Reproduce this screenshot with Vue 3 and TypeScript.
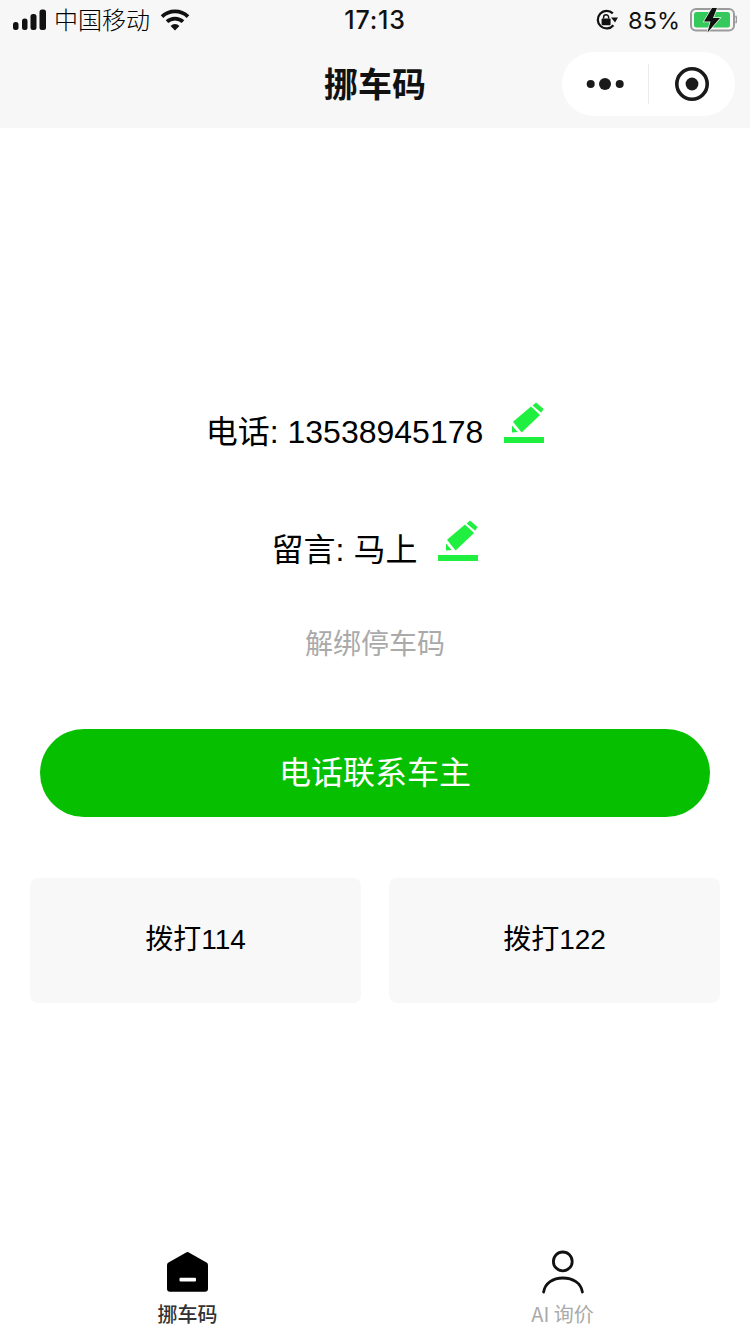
<script setup lang="ts">
const cards: string[] = ['拨打114', '拨打122']
</script>

<template>
  <div class="page">
    <header class="header">
      <div class="status">
        <div class="status-left">
          <svg class="signal" width="34" height="22" viewBox="0 0 34 22">
            <rect x="0" y="13" width="5.5" height="8" rx="2.5" />
            <rect x="9" y="9.5" width="5.5" height="11.5" rx="2.5" />
            <rect x="17.5" y="5" width="6" height="16" rx="2.5" />
            <rect x="26.5" y="0.5" width="6.5" height="20.5" rx="2.5" />
          </svg>
          <span class="carrier">中国移动</span>
          <svg class="wifi" width="30" height="24" viewBox="0 0 30 24">
            <path d="M2 8.6 A19 19 0 0 1 28 8.6" fill="none" stroke="#111" stroke-width="3.8" />
            <path d="M7 13.6 A12 12 0 0 1 23 13.6" fill="none" stroke="#111" stroke-width="3.8" />
            <path d="M10.6 18 A6 6 0 0 1 19.4 18 L15 22.6 Z" fill="#111" />
          </svg>
        </div>
        <div class="time">17:13</div>
        <div class="status-right">
          <svg width="22" height="22" viewBox="0 0 22 22">
            <path d="M17.4 16.2 A8.8 8.8 0 1 1 16.8 4.4" fill="none" stroke="#111" stroke-width="2.2" />
            <path d="M15 8.4 L22 8.4 L19 13.4 Z" fill="#111" />
            <rect x="5.6" y="9.6" width="9" height="6.6" rx="1" fill="#111" />
            <path d="M7.6 9.6 V8.2 A2.5 2.5 0 0 1 12.6 8.2 V9.6" fill="none" stroke="#111" stroke-width="1.5" />
          </svg>
          <span class="percent">85%</span>
          <svg class="battery" width="47" height="26" viewBox="0 0 47 26">
            <rect x="1" y="2" width="43" height="21.5" rx="5" fill="none" stroke="#9b9b9b" stroke-width="2" />
            <rect x="4" y="5" width="36" height="15.5" rx="2.5" fill="#35c95c" />
            <path d="M45.5 9 C47 10 47 15 45.5 16" fill="none" stroke="#9b9b9b" stroke-width="1.6" />
            <path class="bolt" d="M22 1 L14 14.5 L20.5 14.5 L17.5 25.5 L30 11 L23 11 L27 1 Z" />
          </svg>
        </div>
      </div>
      <div class="nav">
        <span></span>
        <h1 class="title">挪车码</h1>
        <div class="capsule">
          <div class="capsule-cell">
            <svg width="40" height="16" viewBox="0 0 40 16">
              <circle cx="5.7" cy="8" r="4" fill="#1a1a1a" />
              <circle cx="20" cy="8" r="6" fill="#1a1a1a" />
              <circle cx="34.7" cy="8" r="4" fill="#1a1a1a" />
            </svg>
          </div>
          <div class="capsule-divider"></div>
          <div class="capsule-cell">
            <svg width="36" height="36" viewBox="0 0 36 36">
              <circle cx="18" cy="18" r="15.2" fill="none" stroke="#1a1a1a" stroke-width="3.6" />
              <circle cx="18" cy="18" r="6.4" fill="#1a1a1a" />
            </svg>
          </div>
        </div>
      </div>
    </header>

    <main class="main">
      <div class="info-row">
        <span>电话: 13538945178</span>
        <svg class="edit" width="40" height="40" viewBox="0 0 40 40">
          <rect x="0" y="34" width="40" height="6" />
          <path d="M9 18.8 L27 3.6 L36 12 L17.6 29.6 Z" />
          <path d="M28.6 2.4 L32 -0.4 L39.6 6 L37.2 9.8 Z" />
          <path d="M8 22.4 L13.6 29 L8 29.4 Z" />
        </svg>
      </div>
      <div class="info-row second">
        <span>留言: 马上</span>
        <svg class="edit" width="40" height="40" viewBox="0 0 40 40">
          <rect x="0" y="34" width="40" height="6" />
          <path d="M9 18.8 L27 3.6 L36 12 L17.6 29.6 Z" />
          <path d="M28.6 2.4 L32 -0.4 L39.6 6 L37.2 9.8 Z" />
          <path d="M8 22.4 L13.6 29 L8 29.4 Z" />
        </svg>
      </div>
      <div class="unbind">解绑停车码</div>
      <button class="call" type="button">电话联系车主</button>
      <div class="cards">
        <div v-for="card in cards" :key="card" class="card">{{ card }}</div>
      </div>
    </main>

    <nav class="tabs">
      <div class="tab active">
        <svg width="44" height="44" viewBox="0 0 44 44">
          <path d="M20.6 2.2 Q21.5 1.6 22.4 2.2 L40.5 12.6 Q42 13.5 42 15.2 V38.7 Q42 41.7 39 41.7 H4 Q1 41.7 1 38.7 V15.2 Q1 13.5 2.5 12.6 Z" fill="#000" />
          <rect x="13.5" y="27.8" width="16.5" height="3.8" rx="1" fill="#fff" />
        </svg>
        <span>挪车码</span>
      </div>
      <div class="tab">
        <svg width="44" height="44" viewBox="0 0 44 44">
          <circle cx="21.8" cy="11.4" r="9.4" fill="none" stroke="#111" stroke-width="2.8" />
          <path d="M2.6 42 C4 33 12 28 21.8 28 C32 28 40 33 41.4 42" fill="none" stroke="#111" stroke-width="2.8" stroke-linecap="round" />
        </svg>
        <span>AI 询价</span>
      </div>
    </nav>
  </div>
</template>

<style scoped>
.page {
  width: 750px;
  height: 1334px;
  display: flex;
  flex-direction: column;
  overflow: hidden;
  background: #fff;
  color: #000;
  font-family: "Liberation Sans", "Noto Sans CJK SC", sans-serif;
}
.header {
  background: #f7f7f7;
  height: 128px;
  flex: none;
}
.status {
  height: 40px;
  display: grid;
  grid-template-columns: 1fr auto 1fr;
  align-items: center;
  padding: 0 13px;
  box-sizing: border-box;
  color: #111;
  font-size: 24px;
  font-family: "Inter", "Noto Sans CJK SC", sans-serif;
}
.status-left {
  display: flex;
  align-items: center;
}
.signal {
  fill: #111;
  margin-right: 7px;
}
.carrier {
  font-family: "Noto Sans CJK SC", sans-serif;
  font-weight: 300;
  line-height: 40px;
  color: #000;
  margin-top: -2px;
}
.wifi {
  margin-left: 10px;
}
.time {
  font-size: 25px;
  letter-spacing: 0.8px;
  font-weight: 500;
}
.status-right {
  display: flex;
  align-items: center;
  justify-content: flex-end;
  gap: 10px;
}
.percent {
  font-size: 23.5px;
  font-weight: 400;
}
.bolt {
  fill: #111;
  stroke: #eaf8ee;
  stroke-width: 1.4px;
  paint-order: stroke;
}
.nav {
  height: 88px;
  display: grid;
  grid-template-columns: 1fr auto 1fr;
  align-items: center;
  padding: 0 15px;
}
.title {
  margin: -2px 0 0;
  font-size: 34px;
  line-height: 48px;
  font-weight: 700;
  color: #111;
  font-family: "Noto Sans CJK SC", sans-serif;
}
.capsule {
  justify-self: end;
  width: 173px;
  height: 64px;
  background: #fff;
  border-radius: 32px;
  display: flex;
  align-items: center;
}
.capsule-cell {
  flex: 1;
  display: flex;
  justify-content: center;
  align-items: center;
}
.capsule-divider {
  width: 1px;
  height: 40px;
  background: #ececec;
}
.main {
  flex: 1;
  padding: 282px 30px 0;
  display: flex;
  flex-direction: column;
}
.info-row {
  height: 44px;
  display: flex;
  justify-content: center;
  align-items: flex-end;
  gap: 21px;
  font-size: 32px;
  line-height: 44px;
}
.info-row.second {
  margin-top: 74px;
}
.edit {
  flex: none;
  margin-bottom: 11px;
  fill: #1ff03f;
  overflow: visible;
}
.unbind {
  margin-top: 53px;
  font-size: 28px;
  line-height: 40px;
  color: #aaa;
  text-align: center;
}
.call {
  margin: 64px 10px 0;
  height: 88px;
  border: none;
  border-radius: 44px;
  background: #06c000;
  color: #fff;
  font-family: inherit;
  font-size: 32px;
  padding: 0 0 6px;
}
.cards {
  margin-top: 61px;
  display: grid;
  grid-template-columns: 1fr 1fr;
  gap: 28px;
}
.card {
  height: 125px;
  box-sizing: border-box;
  padding-bottom: 8px;
  background: #f8f8f8;
  border-radius: 8px;
  display: flex;
  align-items: center;
  justify-content: center;
  font-size: 28px;
}
.tabs {
  flex: none;
  height: 98px;
  display: grid;
  grid-template-columns: 1fr 1fr;
}
.tab {
  display: flex;
  flex-direction: column;
  align-items: center;
  padding-top: 14px;
  gap: 6px;
  font-size: 20px;
  line-height: 28px;
  color: #aaa;
  font-family: "Noto Sans CJK SC", sans-serif;
}
.tab.active {
  color: #333;
  font-weight: 500;
}
.tab svg {
  display: block;
}
</style>
